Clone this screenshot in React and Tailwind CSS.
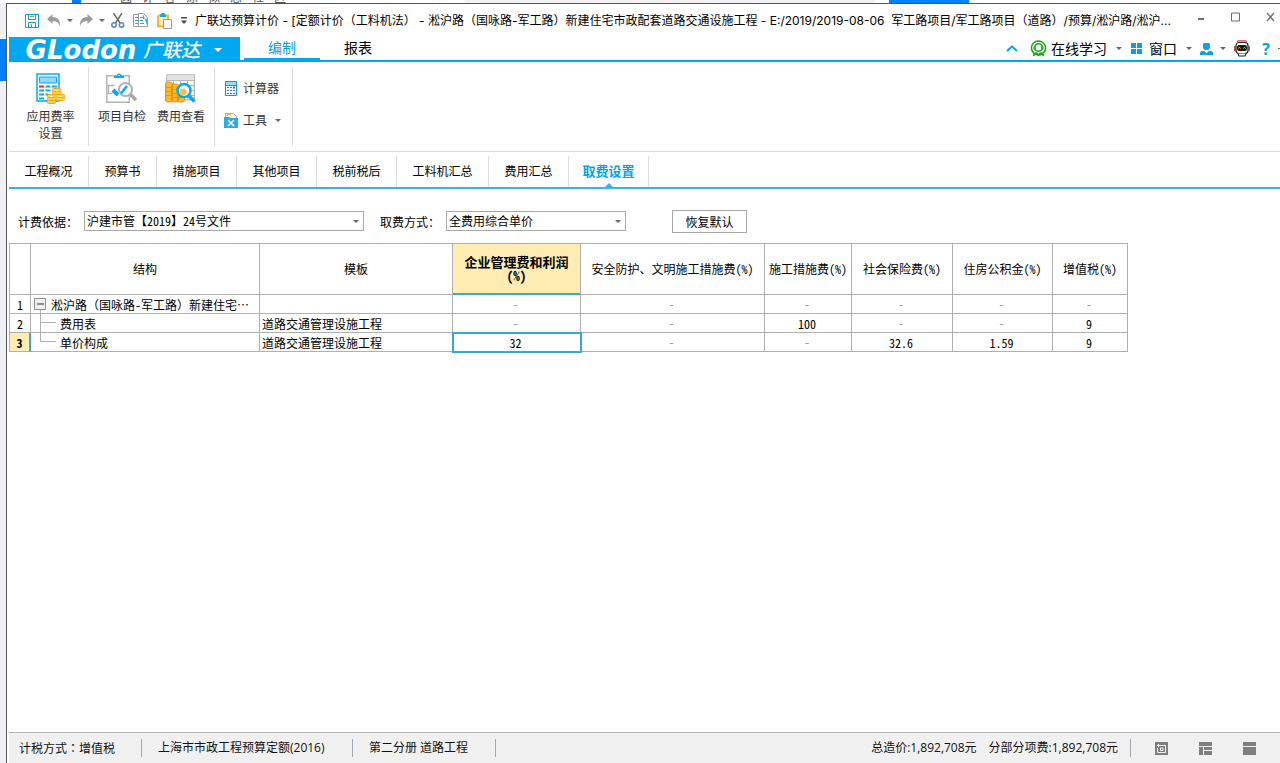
import React, { useState } from 'react';
import clsx from 'clsx';

const TABS = [
  { name: '工程概况', width: 'w-20' },
  { name: '预算书', width: 'w-[68px]' },
  { name: '措施项目', width: 'w-20' },
  { name: '其他项目', width: 'w-20' },
  { name: '税前税后', width: 'w-20' },
  { name: '工料机汇总', width: 'w-[92px]' },
  { name: '费用汇总', width: 'w-20' },
  { name: '取费设置', width: 'w-20' },
];

const COLUMNS = [
  { title: '', width: 'w-[21px]' },
  { title: '结构', width: 'w-[229px]' },
  { title: '模板', width: 'w-[193px]' },
  { title: '企业管理费和利润', unit: true, width: 'w-[128px]', selected: true },
  { title: '安全防护、文明施工措施费', unit: true, width: 'w-[184px]' },
  { title: '施工措施费', unit: true, width: 'w-[87px]' },
  { title: '社会保险费', unit: true, width: 'w-[101px]' },
  { title: '住房公积金', unit: true, width: 'w-[100px]' },
  { title: '增值税', unit: true, width: 'w-[75px]' },
];

const ROWS = [
  { name: '淞沪路（国咏路-军工路）新建住宅…', level: 0, template: '', rates: ['-', '-', '-', '-', '-', '-'] },
  { name: '费用表', level: 1, template: '道路交通管理设施工程', rates: ['-', '-', '100', '-', '-', '9'] },
  { name: '单价构成', level: 1, template: '道路交通管理设施工程', rates: ['32', '-', '-', '32.6', '1.59', '9'], last: true },
];

const SONG = "font-['Noto_Sans_Mono_CJK_SC','Noto_Sans_CJK_SC',sans-serif]";

const Caret = ({ className }) => (
  <svg className={clsx('shrink-0', className)} width="6" height="3" viewBox="0 0 6 3" fill="currentColor">
    <path d="M0 0h6L3 3z" />
  </svg>
);

const SaveIcon = () => (
  <svg width="14" height="14" viewBox="0 0 14 14" fill="none" stroke="#08a4e0">
    <path d="M.5.5h13v13H.5zM3.5.5v5h7v-5M3.5 13.5v-5h7v5" />
    <path d="M5 2.5h4M6.500 10v3.500" stroke="#8b8b8b" />
  </svg>
);

const UndoIcon = ({ flip }) => (
  <svg width="14" height="13" viewBox="0 0 14 13" fill="#9c9c9c" className={flip ? '-scale-x-100' : ''}>
    <path d="M0 5L5.500 0v3c5 0 8 3 7.500 9.500C12 9 10 7.200 5.500 7.200V10z" />
  </svg>
);

const CutIcon = () => (
  <svg width="14" height="15" viewBox="0 0 14 15" fill="none">
    <path d="M2.500 0l6.500 10M11 0L4.500 10" stroke="#6b6b6b" strokeWidth="1.500" />
    <circle cx="3" cy="12" r="2.200" stroke="#5c86b8" strokeWidth="1.500" />
    <circle cx="10.500" cy="12" r="2.200" stroke="#5c86b8" strokeWidth="1.500" />
  </svg>
);

const CopyIcon = () => (
  <svg width="16" height="15" viewBox="0 0 16 15" fill="#fff">
    <path d="M.5 1.500h7v12h-7z" stroke="#9a9a9a" />
    <path d="M2 4.500h3M2 7.500h3M2 10.500h3" stroke="#18a8e0" />
    <path d="M5.500.5h5l4 4v9h-9z" stroke="#9a9a9a" />
    <path d="M10 1v5h4v6z" fill="#25aee8" />
    <path d="M7 4.500h3M7 7.500h3M7 10.500h4" stroke="#18a8e0" />
  </svg>
);

const PasteIcon = () => (
  <svg width="16" height="16" viewBox="0 0 16 16" fill="none">
    <path d="M1 2.500h9v11H1z" fill="#ffe9ae" />
    <path d="M1 2.500h10V6M1 2.500v11h5" stroke="#f5b731" strokeWidth="2" />
    <path d="M3 4h6V1.500H7.500V0h-3v1.500H3z" fill="#12a6e4" />
    <path d="M6.500 6.500h8v9h-8z" fill="#fff" stroke="#9a9a9a" />
  </svg>
);

const Coins = ({ x, y, n }) => (
  <g stroke="#f0a818" fill="#ffd24a">
    {Array.from({ length: n }, (_, i) => (
      <rect key={i} x={x} y={y + (n - 1 - i) * 3} width="8" height="3" rx="1" />
    ))}
  </g>
);

const RateIcon = () => (
  <svg width="30" height="31" viewBox="0 0 30 31" fill="none">
    <path d="M1 1h22v27H1z" fill="#fff" stroke="#08a9ee" strokeWidth="1.500" />
    <path d="M3.500 4h17v6h-17z" fill="#8adcf7" stroke="#08a9ee" />
    <path d="M3 13.500h5" stroke="#f02828" strokeWidth="2" />
    <path d="M9.500 13.500h5M16 13.500h5M3 17.500h5M9.500 17.500h5M3 21.500h5M9.500 21.500h3M3 25.500h5" stroke="#08a9ee" strokeWidth="2" />
    <Coins x={16.5} y={15.500} n={2} />
    <Coins x={11.5} y={21.500} n={3} />
    <Coins x={20.5} y={21.500} n={2} />
    <path d="M14 23.500h3M23 23.500h3M19 17.500h3" stroke="#fff3b0" />
  </svg>
);

const CheckIcon = () => (
  <svg width="32" height="31" viewBox="0 0 32 31" fill="none">
    <path d="M.8 2.800h22.500v26.500H.8z" fill="#fff" stroke="#b4b4b4" strokeWidth="1.500" />
    <path d="M8 5V3h2.500c0-3.500 5-3.500 5 0H18v2z" fill="#08a9ee" />
    <path d="M12 2.500h2" stroke="#fff" />
    <path d="M8.500 12.500h-6v8h4" stroke="#b4b4b4" strokeWidth="1.300" />
    <path d="M7 17l5 5" stroke="#08a9ee" strokeWidth="4" />
    <circle cx="19.500" cy="16.500" r="6.500" fill="#fff" stroke="#b0b0b0" strokeWidth="2" />
    <path d="M15 20.500l6-7.500" stroke="#08a9ee" strokeWidth="2.500" />
    <path d="M24 21l6 6" stroke="#a9a9a9" strokeWidth="3.500" />
  </svg>
);

const ViewIcon = () => (
  <svg width="32" height="31" viewBox="0 0 32 31" fill="none">
    <path d="M1.800 1.800h27.500v25H1.800z" fill="#fff" stroke="#b4b4b4" strokeWidth="1.300" />
    <path d="M2 2h27v5H2z" fill="#e2e2e2" />
    <path d="M2 7.500h27M2 12.500h27M2 17.500h27M2 22.500h27M8.500 7v20M15.500 7v20M22.500 7v20" stroke="#b4b4b4" />
    <g fill="#fdb827" stroke="#e5920e">
      <path d="M.5 10.500c0-2 7-2 7 0v17c0 2-7 2-7 0zM6.500 12.500c0-2 7-2 7 0v15c0 2-7 2-7 0zM12.500 18.500c0-2 7-2 7 0v9c0 2-7 2-7 0z" />
      <path d="M.5 14.500h6M.5 18.500h6M.5 22.500h6M7 16.500h6M7 20.500h6M7 24.500h12" />
    </g>
    <circle cx="19" cy="17.500" r="6.500" fill="#fff" stroke="#08a9ee" strokeWidth="2.500" />
    <circle cx="18" cy="19" r="3.500" fill="#fdc04a" />
    <path d="M23.500 22.500l6 6" stroke="#08a9ee" strokeWidth="3.500" />
  </svg>
);

const CalculatorIcon = () => (
  <svg width="14" height="15" viewBox="0 0 14 15" fill="none">
    <path d="M1.500.5h11v14h-11z" fill="#e9f7fd" stroke="#0b98d6" />
    <path d="M2 1h10v3H2z" fill="#9bdcf5" />
    <path d="M1.500 4.500h11" stroke="#0b98d6" />
    <path d="M3 6.500h2M6 6.500h2M3 9.500h2M6 9.500h2M9 9.500h2M3 12.500h2M6 12.500h2M9 12.500h2" stroke="#3f7fa6" />
    <path d="M9 6.500h2" stroke="#ee3030" strokeWidth="2" />
  </svg>
);

const ToolsIcon = () => (
  <svg width="14" height="15" viewBox="0 0 14 15" fill="none">
    <path d="M1.500 4V.5h8l3 3V6" fill="#fff" stroke="#adadad" />
    <path d="M3.500 3V1.500h3V3" stroke="#f5b731" />
    <path d="M0 4h5l1 1h8v10H0z" fill="#25aee8" />
    <path d="M4 7l6 6M10 7l-6 6" stroke="#fff" strokeWidth="1.500" />
  </svg>
);

const HeadsetIcon = () => (
  <svg width="17" height="17" viewBox="0 0 17 17" fill="none" stroke="#16ab16">
    <circle cx="8.500" cy="8" r="7" strokeWidth="1.600" />
    <circle cx="8.500" cy="7.500" r="3.800" strokeWidth="1.600" />
    <path d="M4.500 6.500v3M12.500 6.500v3" strokeWidth="2" />
    <path d="M3.500 16c1-3.500 3-3.500 5-1 2-2.500 4-2.500 5 1" strokeWidth="1.800" />
  </svg>
);

const UserIcon = () => (
  <svg width="14" height="12" viewBox="0 0 14 12" fill="#0aa2ea">
    <path d="M4 0h5l1 1v4L8.500 7h-4L3 5V1z" />
    <path d="M0 12V9.500L1.500 8h2.700l2.300 2.300L8.800 8h2.700L13 9.500V12z" />
  </svg>
);

const RobotIcon = () => (
  <svg width="16" height="17" viewBox="0 0 16 17" fill="none">
    <path d="M3 1.800L4.500.8h7l1.500 1" stroke="#e0402c" strokeWidth="1.200" />
    <path d="M.8 6v5M15.200 6v5" stroke="#d83a28" strokeWidth="1.400" />
    <rect x="2" y="2.500" width="12" height="11" rx="3" fill="#fff" stroke="#222" strokeWidth="1.200" />
    <rect x="3" y="5" width="10" height="6" rx="2" fill="#1a1a1a" />
    <path d="M4.500 8.500l1-1.200 1 1.200M9.500 8.500l1-1.200 1 1.200" stroke="#ffe000" />
    <path d="M4 13.500l1 2.500h6l1-2.500" fill="#fff" stroke="#222" strokeWidth="1.200" />
  </svg>
);

const TitleBar = () => (
  <header className="flex h-[33px] items-center pl-4 text-xs text-black">
    <div className="flex shrink-0 items-center text-[#666]">
      <button type="button" aria-label="保存" className="mr-2"><SaveIcon /></button>
      <button type="button" aria-label="撤销" className="mr-[6px] flex items-center gap-[6px]"><UndoIcon /><Caret /></button>
      <button type="button" aria-label="恢复" className="mr-[6px] flex items-center gap-[6px]"><UndoIcon flip /><Caret /></button>
      <button type="button" aria-label="剪切" className="mr-2"><CutIcon /></button>
      <button type="button" aria-label="复制" className="mr-2"><CopyIcon /></button>
      <button type="button" aria-label="粘贴" className="mr-2"><PasteIcon /></button>
      <button type="button" aria-label="自定义" className="mr-2">
        <svg width="6" height="7" viewBox="0 0 6 7" fill="#444"><path d="M0 0h6v1.500H0zM0 3.500h6L3 7z" /></svg>
      </button>
    </div>
    <h1 className="min-w-0 truncate font-['Inter','Noto_Sans_CJK_SC',sans-serif] whitespace-pre">
      广联达预算计价 - [定额计价（工料机法） - 淞沪路（国咏路-军工路）新建住宅市政配套道路交通设施工程 - E:/2019/2019-08-06  军工路项目/军工路项目（道路）/预算/淞沪路/淞沪...
    </h1>
    <div className="ml-auto flex shrink-0 items-center gap-[26px] pb-2 pr-[5px] pl-2">
      <button type="button" aria-label="最小化">
        <svg width="8" height="10" viewBox="0 0 8 10"><path d="M1 6h6v2H1z" fill="#6b6b7b" /></svg>
      </button>
      <button type="button" aria-label="最大化">
        <svg width="9" height="10" viewBox="0 0 9 10"><path d="M.5 1h8v8h-8z" fill="none" stroke="#6b6b7b" /></svg>
      </button>
      <button type="button" aria-label="关闭">
        <svg width="9" height="10" viewBox="0 0 9 10"><path d="M1 1l7 8M8 1L1 9" stroke="#6b6b7b" strokeWidth="1.300" /></svg>
      </button>
    </div>
  </header>
);

const MenuBar = () => (
  <nav className="flex h-[25px] border-b-2 border-[#00a8f0] text-sm text-black">
    <button type="button" className="-mb-[2px] flex w-[231px] shrink-0 items-center bg-[#00a8f0] pl-[10px] text-white">
      <span className="w-[124px] font-['DejaVu_Sans',sans-serif] text-[26px] leading-6 font-bold italic">GLodon</span>
      <span className="text-[19px] leading-6 font-medium italic">广联达</span>
      <svg className="ml-[14px]" width="8" height="4" viewBox="0 0 8 4" fill="#fff"><path d="M0 0h8L4 4z" /></svg>
    </button>
    <button type="button" className="ml-1 w-[76px] border-b-2 border-[#00a8f0] leading-5 text-[#00a2e8]">编制</button>
    <button type="button" className="w-[76px] border-b-2 border-transparent leading-5">报表</button>
    <div className="ml-auto flex items-center text-[#666]">
      <button type="button" aria-label="收起" className="mr-3">
        <svg width="12" height="7" viewBox="0 0 12 7" fill="none" stroke="#00a2e8" strokeWidth="2"><path d="M1 6l5-4.500L11 6" /></svg>
      </button>
      <button type="button" className="flex items-center">
        <HeadsetIcon /><span className="mr-[9px] ml-1 leading-5 text-black">在线学习</span><Caret />
      </button>
      <button type="button" className="ml-[9px] flex items-center">
        <svg width="12" height="11" viewBox="0 0 12 11" fill="#00a2e8"><path d="M0 0h5v5H0zM6 0h5v5H6zM0 6h5v5H0zM6 6h5v5H6z" /></svg>
        <span className="mr-[9px] ml-[6px] leading-5 text-black">窗口</span><Caret />
      </button>
      <button type="button" aria-label="用户" className="ml-2 flex items-center gap-[6px]">
        <UserIcon /><Caret />
      </button>
      <button type="button" aria-label="助手" className="ml-2"><RobotIcon /></button>
      <button type="button" className="ml-3 w-2 text-base leading-5 font-bold text-[#00a2e8]">?</button>
      <span className="ml-2 h-px w-[2px] bg-[#666]" />
    </div>
  </nav>
);

const Ribbon = () => (
  <div className="flex border-b border-[#dcdcdc] pt-[5px] pb-[5px] text-xs leading-[17px] text-[#333]">
    <div className="flex h-[79px] w-20 justify-center border-r border-[#dcdcdc] pt-[6px] pl-1">
      <button type="button" className="flex w-[52px] flex-col items-center">
        <RateIcon /><span className="mt-1 w-[50px]">应用费率设置</span>
      </button>
    </div>
    <div className="flex h-[79px] w-[126px] justify-between border-r border-[#dcdcdc] pt-[6px] pr-2 pl-2">
      <button type="button" className="flex w-[50px] flex-col items-center">
        <CheckIcon /><span className="mt-1 whitespace-nowrap">项目自检</span>
      </button>
      <button type="button" className="flex w-[50px] flex-col items-center">
        <ViewIcon /><span className="mt-1 whitespace-nowrap">费用查看</span>
      </button>
    </div>
    <div className="flex h-[79px] w-[78px] flex-col gap-[15px] border-r border-[#dcdcdc] pt-[13px] pl-[9px]">
      <button type="button" className="flex items-center gap-[5px]"><CalculatorIcon />计算器</button>
      <button type="button" className="flex items-center gap-[5px]"><ToolsIcon />工具<Caret className="ml-[3px] text-[#666]" /></button>
    </div>
  </div>
);

const Select = ({ id, label, value, className }) => (
  <div className="flex h-[21px] items-start">
    <label htmlFor={id} className="w-[66px] leading-[21px] whitespace-nowrap">{label}：</label>
    <div className="relative">
      <select id={id} defaultValue={value} className={clsx('block h-5 appearance-none border border-[#a8a8a8] bg-white pl-[2px] leading-4 outline-none', className)}>
        <option>{value}</option>
      </select>
      <Caret className="pointer-events-none absolute top-[9px] right-[5px] text-[#666]" />
    </div>
  </div>
);

const RateTable = () => (
  <table className="w-[1118px] table-fixed border-separate border-spacing-0 border-t border-l border-[#b0b0b0] text-center">
    <colgroup>
      {COLUMNS.map((col, i) => <col key={i} className={col.width} />)}
    </colgroup>
    <thead>
      <tr className="h-[51px]">
        {COLUMNS.map((col, i) => (
          <th
            key={i}
            scope="col"
            className={clsx(
              'border-r border-[#b0b0b0] p-0',
              col.selected
                ? 'border-b-2 border-b-[#3aa8d4] bg-[#ffecb3] text-[13px] leading-[14px] font-bold'
                : 'border-b font-normal whitespace-nowrap'
            )}
          >
            {col.title}
            {col.selected && <br />}
            {col.unit && '(%)'}
          </th>
        ))}
      </tr>
    </thead>
    <tbody>
      {ROWS.map((row, r) => (
        <tr key={r} className="h-[19px] leading-4">
          <th
            scope="row"
            className={clsx(
              'border-b border-[#b0b0b0] px-0 pt-[2px] pb-0',
              row.last ? 'border-r-2 border-r-[#3aa8d4] bg-[#ffecb3] font-bold' : 'border-r font-normal'
            )}
          >
            {r + 1}
          </th>
          <td className="overflow-hidden border-r border-b border-[#b0b0b0] p-0 text-left">
            <div className="flex h-[18px] items-center whitespace-nowrap">
              {row.level === 0 ? (
                <svg className="mr-1 ml-[2px] shrink-0" width="14" height="18" viewBox="0 0 14 18">
                  <path d="M1.500 3.500h11v11h-11z" fill="#eef0f3" stroke="#909090" />
                  <path d="M4 9h7" stroke="#222" />
                  <path d="M7.500 15v3" stroke="#b0b0b0" />
                </svg>
              ) : (
                <svg className="mr-1 ml-2 shrink-0" width="17" height="18" viewBox="0 0 17 18" fill="none" stroke="#b0b0b0">
                  <path d={row.last ? 'M1.500 0v8.500H17' : 'M1.500 0v18M1.500 8.500H17'} />
                </svg>
              )}
              <span className="pt-[2px]">{row.name}</span>
            </div>
          </td>
          <td className="border-r border-b border-[#b0b0b0] pt-[2px] pr-0 pb-0 pl-[2px] text-left whitespace-nowrap">{row.template}</td>
          {row.rates.map((rate, i) => (
            <td
              key={i}
              className={clsx(
                'border-r border-b border-[#b0b0b0] pr-[2px] pb-0 pl-0',
                rate === '-' ? 'pt-0 text-[#999]' : 'pt-[2px]',
                row.last && i === 0 && 'outline-2 -outline-offset-1 outline-[#3aa8d4]'
              )}
            >
              {rate}
            </td>
          ))}
        </tr>
      ))}
    </tbody>
  </table>
);

const StatusBar = () => (
  <footer className="flex h-[31px] items-center border-t border-[#b4b4b4] bg-[#f0f0f0] pl-[10px] text-xs whitespace-nowrap text-[#111]">
    <span className="w-[122px]">计税方式<span className="font-['Noto_Sans_CJK_TC',sans-serif]">：</span>增值税</span>
    <span className="h-[18px] w-px bg-[#a0a8b4]" />
    <span className="w-[210px] pl-4">上海市市政工程预算定额(2016)</span>
    <span className="h-[18px] w-px bg-[#a0a8b4]" />
    <span className="w-[142px] pl-4">第二分册 道路工程</span>
    <span className="h-[18px] w-px bg-[#a0a8b4]" />
    <div className="ml-auto flex items-center pr-6">
      <span className="mr-3">总造价:1,892,708元</span>
      <span className="mr-3">分部分项费:1,892,708元</span>
      <span className="mr-6 h-[18px] w-px bg-[#a0a8b4]" />
      <div className="flex gap-[31px]">
        <button type="button" aria-label="还原">
          <svg width="13" height="13" viewBox="0 0 13 13" fill="none">
            <path d="M0 0h13v13H0z" fill="#7f7f7f" />
            <path d="M5 3.500h5.500v7h-8V6M3.500 2v3M2 3.500h3M8 6H5.500v2.500H8z" stroke="#f0f0f0" />
          </svg>
        </button>
        <button type="button" aria-label="列表">
          <svg width="13" height="13" viewBox="0 0 13 13" fill="#7f7f7f"><path d="M0 0h13v4H0zM0 5h4v8H0zM5 5h8v3H5zM5 9h8v4H5z" /></svg>
        </button>
        <button type="button" aria-label="窗格">
          <svg width="13" height="13" viewBox="0 0 13 13" fill="#7f7f7f"><path d="M0 0h13v4H0zM0 5h13v8H0z" /></svg>
        </button>
      </div>
    </div>
  </footer>
);

const App = () => {
  const [activeTab, setActiveTab] = useState('取费设置');

  return (
    <div className="flex min-h-screen flex-col bg-[#eff1f4] font-['Open_Sans','Noto_Sans_CJK_SC',sans-serif]">
      {/* Arkadaki pencereden görünen şerit */}
      <div className="flex h-[3px] overflow-hidden bg-white">
        <div className="ml-[72px] w-[9px] bg-[#0080ff]" />
        <div className="ml-[39px] w-[345px] text-xs leading-3 text-[#555]">
          <div className="-mt-[8px] flex w-[166px] justify-between">
            {[...'圆计容涂似思社区'].map((ch) => <span key={ch}>{ch}</span>)}
          </div>
        </div>
        <div className="w-[410px] bg-[#f3f3f5]" />
        <div className="ml-[14px] w-20 bg-[#0080ff]" />
      </div>

      <div className="flex flex-1">
        <div className="w-[6px] shrink-0 pt-9">
          <div className="h-[42px] bg-[#0080ff]" />
        </div>
        <div className="flex min-w-0 flex-1 flex-col border-t border-l border-[#555] bg-white pl-[2px]">
          <TitleBar />
          <MenuBar />
          <Ribbon />

          <div className={clsx('flex border-b-2 border-[#3cb4e1] pt-1 text-xs text-black', SONG)}>
            {TABS.map(({ name, width }) => (
              <button
                key={name}
                type="button"
                onClick={() => setActiveTab(name)}
                className={clsx(
                  'relative h-[31px] border-r border-[#dcdcdc] pb-[2px]',
                  width,
                  activeTab === name && 'text-[13px] font-bold text-[#00a2e8]'
                )}
              >
                {name}
                {activeTab === name && (
                  <svg className="absolute bottom-0 left-9" width="8" height="4" viewBox="0 0 8 4" fill="#3cb4e1"><path d="M0 4l4-4 4 4z" /></svg>
                )}
              </button>
            ))}
          </div>

          <main className={clsx('flex-1 text-xs text-black', SONG)}>
            <div className="flex items-center gap-4 px-[9px] pt-[21px] pb-[10px]">
              <Select id="basis" label="计费依据" value="沪建市管【2019】24号文件" className="w-[280px]" />
              <Select id="method" label="取费方式" value="全费用综合单价" className="w-[180px]" />
              <button type="button" className="ml-[30px] h-[23px] w-[75px] border border-[#a8a8a8] bg-white">恢复默认</button>
            </div>
            <RateTable />
          </main>

          <StatusBar />
        </div>
      </div>
    </div>
  );
};

export default App;
